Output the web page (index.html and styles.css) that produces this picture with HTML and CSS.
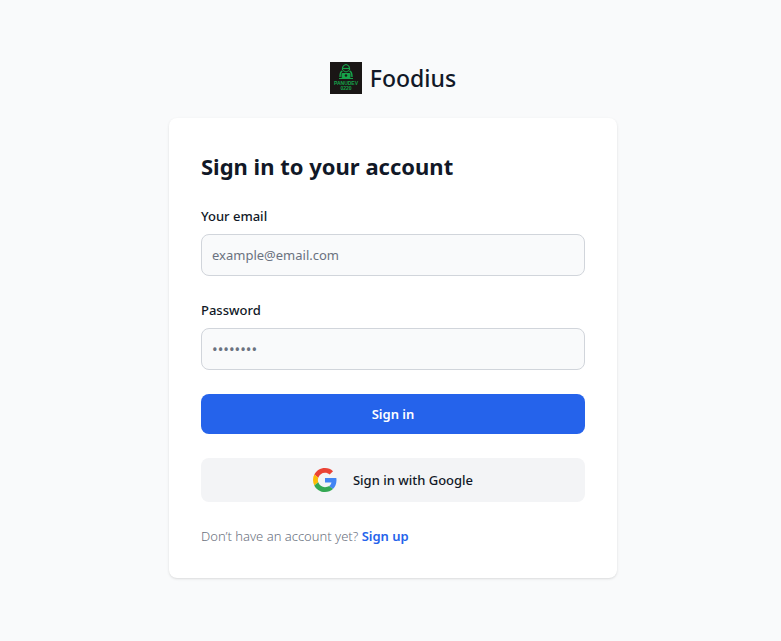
FILE: index.html
```html
<!DOCTYPE html>
<html lang="en">
<head>
  <meta charset="utf-8">
  <meta name="viewport" content="width=device-width, initial-scale=1">
  <title>Foodius</title>
  <link rel="stylesheet" href="styles.css">
</head>
<body>
  <main class="page">
    <a class="brand" href="#">
      <svg class="brand-logo" viewBox="0 0 32 32" aria-hidden="true">
        <rect width="32" height="32" fill="#1a1615"/>
        <g fill="none" stroke="#16a34a">
          <path d="M12.500 8V6.500c0-2 1.500-3.500 3.500-4 2 .5 3.500 2 3.500 4V8" stroke-width="1.200"/>
          <path d="M13 6.500h6" stroke-width="1.200"/>
          <path d="M13 8.500l3 1.500 3-1.500" stroke-width="1"/>
          <path d="M12.500 9c-2 .5-2.500 2-2.500 6M19.500 9c2 .5 2.500 2 2.500 6" stroke-width="1.500"/>
          <path d="M9 16.500h14" stroke-width="1"/>
        </g>
        <rect x="11.500" y="11" width="9" height="5" rx="1" fill="#16a34a"/>
        <circle cx="16" cy="13.500" r="1.200" fill="#1a1615"/>
        <text class="logo-name" x="16" y="23" text-anchor="middle">PANUDEV</text>
        <text class="logo-sub" x="16" y="28" text-anchor="middle">0220</text>
      </svg>
      <span>Foodius</span>
    </a>
    <section class="card">
      <h1 class="title">Sign in to your account</h1>
      <form class="form">
        <div class="field">
          <label for="email">Your email</label>
          <input id="email" type="email" placeholder="example@email.com">
        </div>
        <div class="field">
          <label for="password">Password</label>
          <input id="password" class="password" type="password" placeholder="••••••••">
        </div>
        <button class="button primary" type="submit">Sign in</button>
        <button class="button google" type="button">
          <svg class="google-icon" viewBox="0 0 48 48" aria-hidden="true">
            <path fill="#EA4335" d="M24 9.500c3.540 0 6.710 1.220 9.210 3.600l6.850-6.850C35.900 2.380 30.470 0 24 0 14.620 0 6.510 5.380 2.560 13.220l7.980 6.190C12.430 13.720 17.740 9.500 24 9.500z"/>
            <path fill="#4285F4" d="M46.980 24.550c0-1.570-.15-3.090-.38-4.550H24v9.020h12.940c-.58 2.960-2.260 5.480-4.780 7.180l7.730 6c4.510-4.180 7.090-10.360 7.090-17.650z"/>
            <path fill="#FBBC05" d="M10.530 28.590c-.48-1.450-.76-2.990-.76-4.590s.27-3.140.76-4.590l-7.980-6.190C.92 16.460 0 20.120 0 24c0 3.880.92 7.540 2.560 10.780l7.970-6.190z"/>
            <path fill="#34A853" d="M24 48c6.480 0 11.930-2.130 15.890-5.810l-7.730-6c-2.150 1.450-4.920 2.300-8.160 2.300-6.260 0-11.570-4.220-13.470-9.910l-7.980 6.190C6.510 42.620 14.620 48 24 48z"/>
          </svg>
          <span>Sign in with Google</span>
        </button>
        <p class="signup">Don’t have an account yet? <a href="#">Sign up</a></p>
      </form>
    </section>
  </main>
</body>
</html>
```
FILE: styles.css
```css
* {
  box-sizing: border-box;
}

body {
  margin: 0;
  background: #f9fafb;
  color: #111827;
  font-family: "Segoe UI", "Noto Sans", sans-serif;
  font-size: 13px;
  line-height: 20px;
}

.page {
  min-height: 100vh;
  padding: 32px 19px 33px 24px;
  display: flex;
  flex-direction: column;
  align-items: center;
  justify-content: center;
}

.brand {
  display: flex;
  align-items: center;
  gap: 8px;
  margin-bottom: 24px;
  color: inherit;
  font-size: 23px;
  font-weight: 500;
  line-height: 32px;
  text-decoration: none;
}

.brand-logo {
  width: 32px;
  height: 32px;
}

.logo-name,
.logo-sub {
  fill: #16a34a;
  font-family: "Liberation Sans", sans-serif;
  font-size: 5px;
  font-weight: 700;
}

.card {
  width: 100%;
  max-width: 448px;
  padding: 32px;
  border-radius: 8px;
  background: #fff;
  box-shadow: 0 1px 3px rgba(0, 0, 0, 0.1), 0 1px 2px -1px rgba(0, 0, 0, 0.1);
}

.title {
  margin: 0 0 24px;
  font-size: 22px;
  font-weight: 700;
  line-height: 32px;
}

.form {
  display: flex;
  flex-direction: column;
  gap: 24px;
}

.field {
  display: flex;
  flex-direction: column;
  gap: 8px;
}

.field label {
  font-weight: 500;
}

.field input {
  width: 100%;
  height: 42px;
  padding: 10px;
  border: 1px solid #d1d5db;
  border-radius: 8px;
  background: #f9fafb;
  color: inherit;
  font: inherit;
}

.field .password {
  font-size: 15px;
}

.field input::placeholder {
  color: #6b7280;
  opacity: 1;
}

.button {
  display: flex;
  align-items: center;
  justify-content: center;
  gap: 16px;
  width: 100%;
  padding: 10px 20px;
  border: 0;
  border-radius: 8px;
  font: inherit;
  font-weight: 500;
  cursor: pointer;
}

.primary {
  background: #2563eb;
  color: #fff;
  font-weight: 600;
}

.google {
  background: #f3f4f6;
  color: #111827;
}

.google-icon {
  width: 24px;
  height: 24px;
}

.signup {
  margin: 0;
  color: #6b7280;
  font-weight: 300;
}

.signup a {
  color: #2563eb;
  font-weight: 600;
  text-decoration: none;
}
```
